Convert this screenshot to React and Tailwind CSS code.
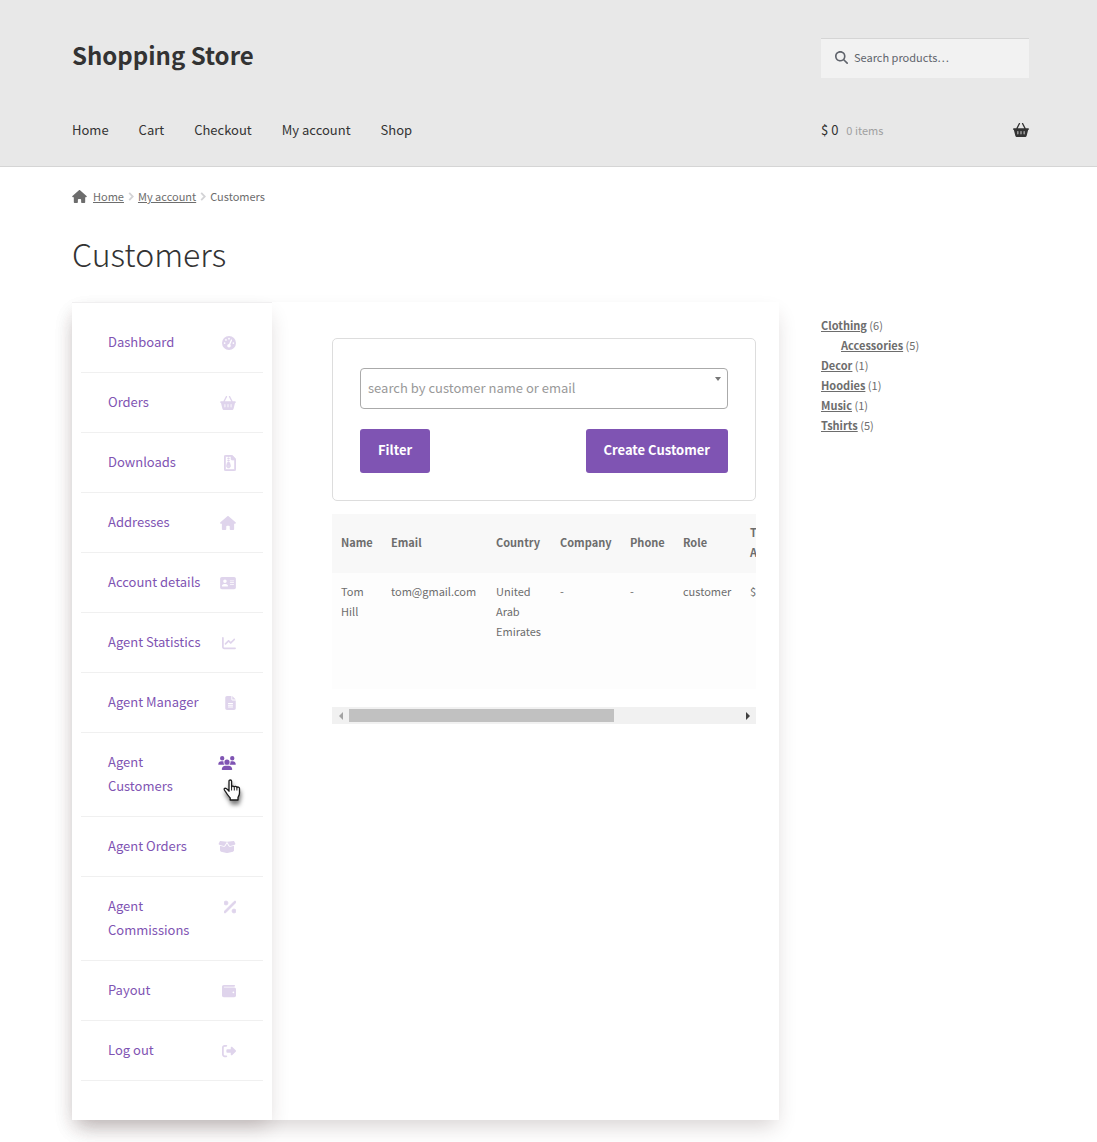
import {
  FaAddressCard,
  FaBasketShopping,
  FaBoxOpen,
  FaChartLine,
  FaFileLines,
  FaGaugeHigh,
  FaHouse,
  FaMagnifyingGlass,
  FaPercent,
  FaRegFileZipper,
  FaRightFromBracket,
  FaUsers,
  FaWallet
} from 'react-icons/fa6';

const mainLinks = ['Home', 'Cart', 'Checkout', 'My account', 'Shop'];

const accountLinks = [
  { label: 'Dashboard', Icon: FaGaugeHigh, size: 'size-[14px]' },
  { label: 'Orders', Icon: FaBasketShopping, size: 'h-[14px] w-4' },
  { label: 'Downloads', Icon: FaRegFileZipper, size: 'h-4 w-3 stroke-[20]' },
  { label: 'Addresses', Icon: FaHouse, size: 'h-[14px] w-4' },
  { label: 'Account details', Icon: FaAddressCard, size: 'h-[14px] w-4' },
  { label: 'Agent Statistics', Icon: FaChartLine, size: 'size-[14px]' },
  { label: 'Agent Manager', Icon: FaFileLines, size: 'h-[14px] w-[11px]' },
  { label: 'Agent Customers', Icon: FaUsers, size: 'h-[14px] w-[18px]', active: true },
  { label: 'Agent Orders', Icon: FaBoxOpen, size: 'h-[14px] w-[18px]' },
  { label: 'Agent Commissions', Icon: FaPercent, size: 'h-4 w-3 stroke-[24]' },
  { label: 'Payout', Icon: FaWallet, size: 'size-[14px]' },
  { label: 'Log out', Icon: FaRightFromBracket, size: 'size-[14px]' }
];

const categories = [
  { name: 'Clothing', count: 6 },
  { name: 'Accessories', count: 5, child: true },
  { name: 'Decor', count: 1 },
  { name: 'Hoodies', count: 1 },
  { name: 'Music', count: 1 },
  { name: 'Tshirts', count: 5 }
];

const columns = [
  { title: 'Name', width: 'w-[50px]' },
  { title: 'Email', width: 'w-[105px]' },
  { title: 'Country', width: 'w-[64px]' },
  { title: 'Company', width: 'w-[70px]' },
  { title: 'Phone', width: 'w-[53px]' },
  { title: 'Role', width: 'w-[67px]' },
  { title: 'Total Amount', width: 'w-[230px]' }
];

const customers = [
  ['Tom Hill', 'tom@gmail.com', 'United Arab Emirates', '-', '-', 'customer', '$ 0']
];

function Header() {
  return (
    <header className="border-b border-[#d5d5d5] bg-[#e8e8e8] pl-18 pr-17 pt-[38px]">
      <div className="grid grid-cols-[minmax(0,1fr)_208px] gap-[42px]">
        <a href="#" className="text-[24px] leading-[34px] font-bold text-[#333333]">
          Shopping Store
        </a>
        <div className="flex h-10 items-center gap-1.5 border-t border-[#d5d5d5] bg-[#f2f2f2] pb-0.5 pl-3.5 text-[#60646c]">
          <FaMagnifyingGlass className="size-[13px] shrink-0" />
          <input
            type="search"
            aria-label="Search for:"
            placeholder="Search products…"
            className="h-6 w-full min-w-0 bg-transparent pb-0.5 text-[11px] outline-none placeholder:text-[#60646c]"
          />
        </div>
      </div>
      <div className="grid grid-cols-[minmax(0,1fr)_208px] gap-[42px] pt-10 pb-6 text-[13px] leading-6 text-[#333333]">
        <nav className="flex gap-[30px]">
          {mainLinks.map((link) => (
            <a key={link} href="#">{link}</a>
          ))}
        </nav>
        <a href="#" className="flex items-center">
          <span>$ 0</span>
          <span className="ml-2 text-[11px] text-[#a0a0a0]">0 items</span>
          <FaBasketShopping className="ml-auto size-4" />
        </a>
      </div>
    </header>
  );
}

function Chevron() {
  return (
    <svg viewBox="0 0 6 10" className="mx-1 h-[9px] w-1.5" fill="none" stroke="#d3d3d6" strokeWidth="2">
      <path d="M1 1l4 4-4 4" />
    </svg>
  );
}

function Breadcrumb() {
  return (
    <nav className="flex items-center pt-[19px] text-[11px] leading-5 text-[#6d6d6d]">
      <FaHouse className="mr-1.5 h-[13px] w-[15px]" />
      <a href="#" className="underline">Home</a>
      <Chevron />
      <a href="#" className="underline">My account</a>
      <Chevron />
      <span>Customers</span>
    </nav>
  );
}

function HandPointer() {
  return (
    <svg
      viewBox="0 0 18 22"
      className="absolute left-[115px] top-[29px] h-[22px] w-[18px] drop-shadow-[1px_4px_2px_rgba(0,0,0,0.5)]"
    >
      <path
        d="M6 2.200C6 .6 8.600.6 8.600 2.200V8c.2-1.300 2.500-1.200 2.700.2.300-1.200 2.400-1 2.600.4.500-1 2.600-.7 2.600 1v4.400c0 2-.8 3-1.500 4.400V21H7.200v-2C5.500 17 3.700 15 2.600 12.800c-1-1.300-2-2.400-1.300-3.200 1-1 2.500 0 4.700 2.600z"
        fill="white"
        stroke="#1a1a1a"
        strokeWidth="1.300"
        strokeLinejoin="round"
      />
      <path d="M8.600 8v3.500M11.300 8.500v3M13.900 9v2.500" stroke="#1a1a1a" />
    </svg>
  );
}

function AccountNav() {
  return (
    <nav className="w-[200px] shrink-0 border-t border-[#f0eff0] bg-white px-[9px] pt-2.5 pb-[39px] shadow-[0_10px_20px_-4px_rgba(54,30,32,0.2)]">
      <ul>
        {accountLinks.map(({ label, Icon, size, active }) => (
          <li key={label} className="border-b border-[#f0f0f0]">
            <a
              href="#"
              className="relative mx-[27px] mt-[17px] mb-[18px] flex justify-between gap-4 text-[13px] leading-6 text-[#7f54b3]"
            >
              <span>{label}</span>
              <span className="flex h-6 w-[18px] shrink-0 items-center justify-end pt-0.5">
                <Icon className={`${size} ${active ? '' : 'text-[#dfd4ec]'}`} />
              </span>
              {active && <HandPointer />}
            </a>
          </li>
        ))}
      </ul>
    </nav>
  );
}

function FilterForm() {
  return (
    <form className="rounded-[5px] border border-[#dddddd] px-[27px] pt-[29px] pb-[27px]">
      <div className="relative">
        <select
          aria-label="Customer"
          className="h-[41px] w-full appearance-none rounded-[4px] border border-[#aaaaaa] bg-white px-[7px] pb-0.5 text-[13px] text-[#999999]"
        >
          <option>search by customer name or email</option>
        </select>
        <svg viewBox="0 0 6 4" className="pointer-events-none absolute right-[7px] top-[9px] h-1 w-1.5" fill="#777777">
          <path d="M0 0h6L3 4z" />
        </svg>
      </div>
      <div className="mt-5 flex justify-between text-[13px] font-bold text-white">
        <button type="button" className="h-11 rounded-[3px] bg-[#7f54b3] px-[18px] pb-0.5">Filter</button>
        <button type="button" className="h-11 rounded-[3px] bg-[#7f54b3] px-[18px] pb-0.5">Create Customer</button>
      </div>
    </form>
  );
}

function CustomerTable() {
  return (
    <div className="mt-[13px]">
      <div className="overflow-hidden">
        <table className="w-[639px] table-fixed text-left text-[11px] leading-5 text-[#6d6d6d]">
          <thead className="bg-[#f8f8f8]">
            <tr className="h-[59px]">
              {columns.map(({ title, width }) => (
                <th key={title} className={`${width} pb-[3px] pl-[9px] font-bold`}>
                  <span className={title === 'Total Amount' ? 'block w-10' : ''}>{title}</span>
                </th>
              ))}
            </tr>
          </thead>
          <tbody className="bg-[#fdfdfd]">
            {customers.map((row) => (
              <tr key={row[1]} className="h-[116px] align-top">
                {row.map((cell, i) => (
                  <td key={columns[i].title} className="pt-2 pl-[9px]">{cell}</td>
                ))}
              </tr>
            ))}
          </tbody>
        </table>
      </div>
      <div className="mt-[18px] flex h-[17px] items-center bg-[#f1f1f1]">
        <span className="flex w-[17px] justify-center">
          <svg viewBox="0 0 4 8" className="h-2 w-1" fill="#a3a3a3"><path d="M4 0v8L0 4z" /></svg>
        </span>
        <div className="flex-1">
          <div className="h-[13px] w-[68%] bg-[#c1c1c1]" />
        </div>
        <span className="flex w-[17px] justify-center">
          <svg viewBox="0 0 4 8" className="h-2 w-1" fill="#404040"><path d="M0 0v8l4-4z" /></svg>
        </span>
      </div>
    </div>
  );
}

function CategoryList() {
  return (
    <aside className="pt-[13px]">
      <ul className="text-[11px] leading-5 text-[#6d6d6d]">
        {categories.map(({ name, count, child }) => (
          <li key={name} className={child ? 'pl-5' : ''}>
            <a href="#" className="font-bold underline">{name}</a> ({count})
          </li>
        ))}
      </ul>
    </aside>
  );
}

export default function App() {
  return (
    <div className="min-h-screen overflow-hidden bg-white pb-[22px] font-['Noto_Sans_CJK_SC',sans-serif]">
      <Header />
      <div className="pl-18 pr-17">
        <Breadcrumb />
        <h1 className="pt-[23px] text-[32px] leading-12 font-light text-[#333333]">Customers</h1>
        <div className="grid grid-cols-[minmax(0,1fr)_208px] gap-[42px] pt-[25px]">
          <main className="flex bg-white shadow-[0_10px_20px_-4px_rgba(54,30,32,0.2)]">
            <AccountNav />
            <section className="min-w-0 flex-1 pt-9 pr-[23px] pl-[60px]">
              <FilterForm />
              <CustomerTable />
            </section>
          </main>
          <CategoryList />
        </div>
      </div>
    </div>
  );
}
